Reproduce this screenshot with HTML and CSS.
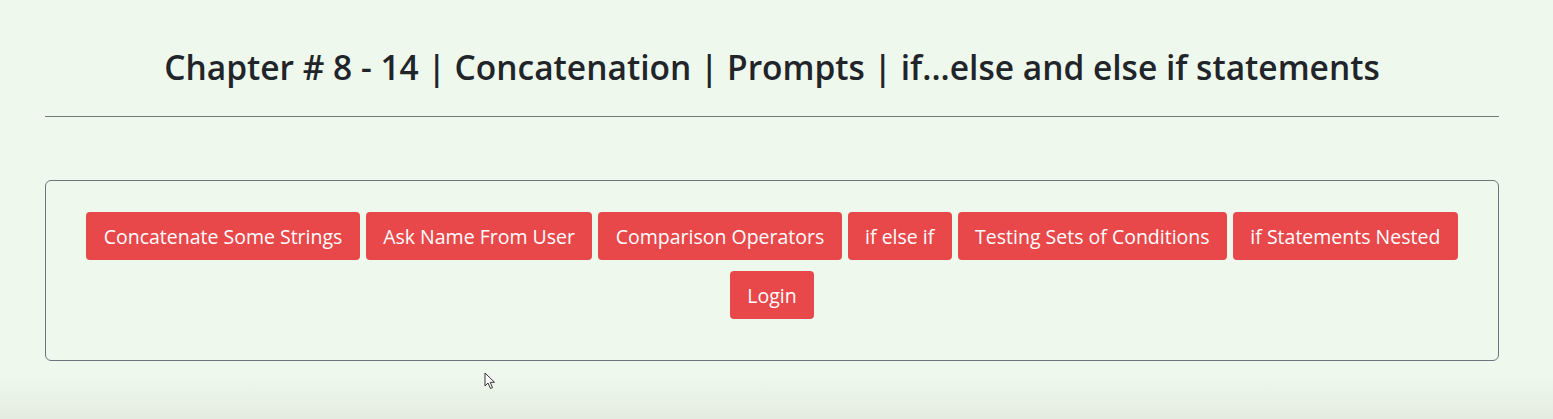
FILE: index.html
```html
<!DOCTYPE html>
<html>
<head>
<meta charset="utf-8">
<link rel="stylesheet" href="styles.css">
</head>
<body>
<div class="page">
  <h2 class="title">Chapter # 8 - 14 | Concatenation | Prompts | if...else and else if statements</h2>
  <hr class="rule">
  <div class="panel">
    <button class="btn">Concatenate Some Strings</button>
    <button class="btn">Ask Name From User</button>
    <button class="btn">Comparison Operators</button>
    <button class="btn">if else if</button>
    <button class="btn">Testing Sets of Conditions</button>
    <button class="btn">if Statements Nested</button>
    <button class="btn">Login</button>
  </div>
</div>
<svg class="cursor" width="12" height="18" viewBox="0 0 12 18"><path d="M1 1 L1 14 L4 11 L6.5 16.5 L8.5 15.6 L6.2 10.3 L10.5 10.3 Z" fill="#fff" stroke="#333" stroke-width="1" stroke-linejoin="round"/></svg>
</body>
</html>
```
FILE: styles.css
```css
html, body {
  margin: 0;
  padding: 0;
}
body {
  width: 1553px;
  height: 419px;
  overflow: hidden;
  position: relative;
  background: linear-gradient(to bottom, #eef8ec 0, #eef8ec 375px, #e4ece2 419px);
  font-family: "Open Sans", "Noto Sans", sans-serif;
  color: #212529;
}
.page {
  width: 1454px;
  margin-left: 45px;
  padding-top: 40px;
}
.title {
  margin: 0;
  text-align: center;
  font-size: 33.5px;
  font-weight: 600;
  line-height: 54px;
}
.rule {
  margin: 22px 0 0;
  border: 0;
  border-top: 1px solid #6f7a70;
}
.panel {
  margin-top: 63px;
  height: 181px;
  box-sizing: border-box;
  border: 1px solid #6c757d;
  border-radius: 6px;
  padding: 31px 40px 0;
  display: flex;
  flex-wrap: wrap;
  justify-content: center;
  align-content: flex-start;
  column-gap: 6px;
  row-gap: 11px;
}
.btn {
  font-family: inherit;
  font-size: 19.5px;
  color: #fff;
  background: #e8484a;
  border: 0;
  border-radius: 4px;
  height: 48px;
  padding: 0 17.4px;
}
.cursor {
  position: absolute;
  left: 484px;
  top: 372px;
}
```
